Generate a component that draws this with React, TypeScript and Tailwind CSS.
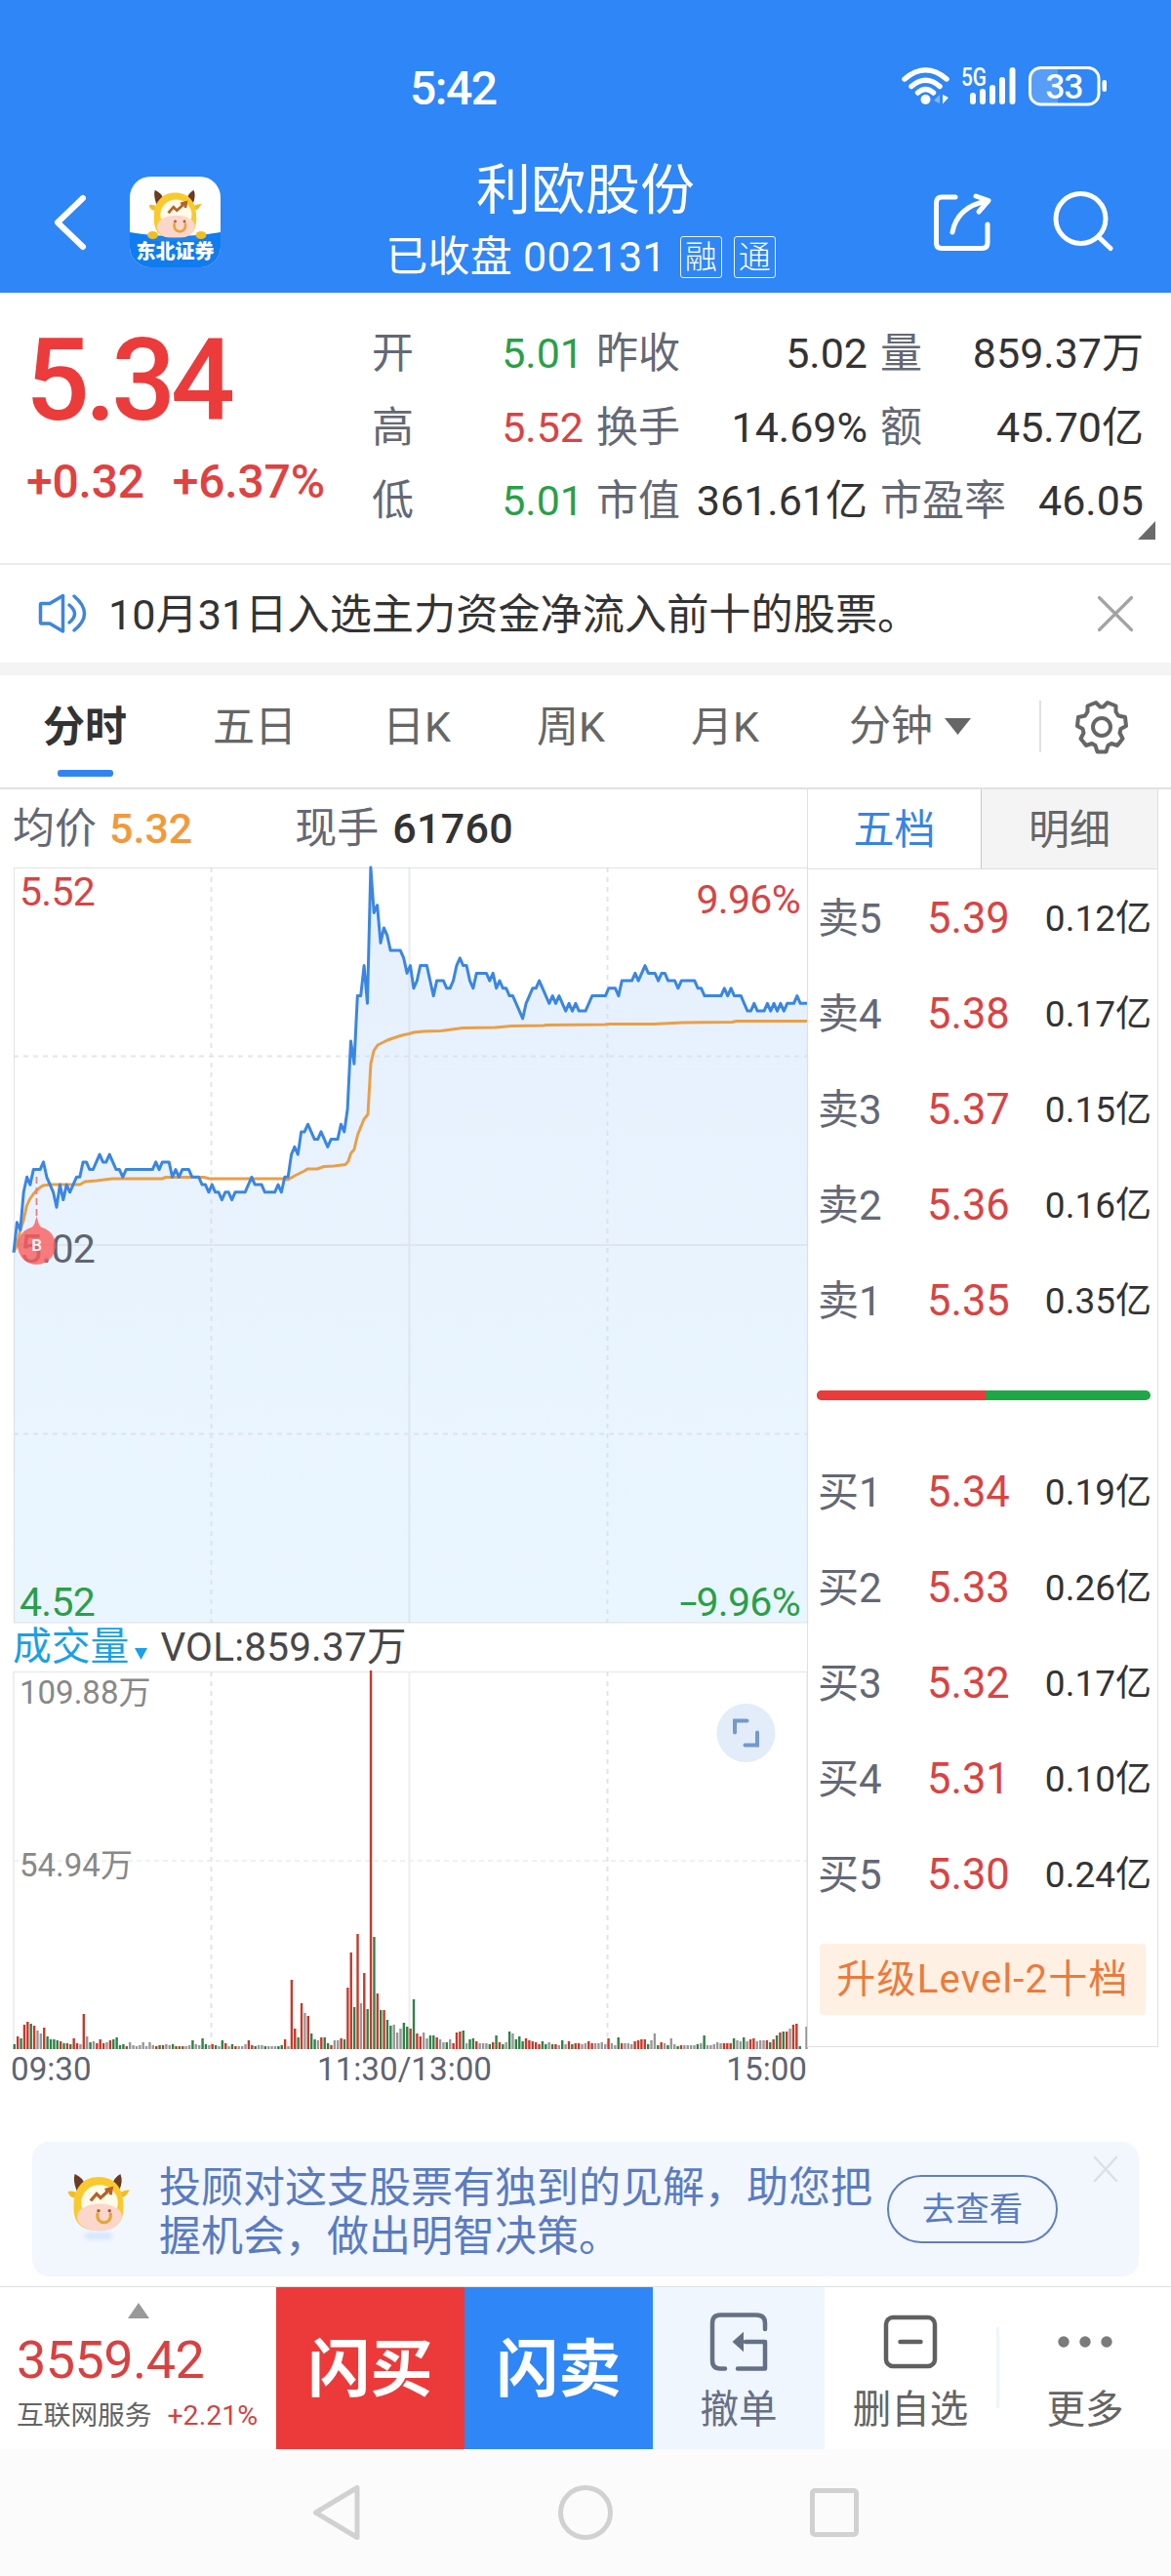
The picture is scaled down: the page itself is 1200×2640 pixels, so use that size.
import { useState } from 'react';

// price in cents, one entry per minute (09:30 - 15:00)
const PRICES = `
501 505 504 509 511 510 512 512 512 513 511 510 509 507 510 508 510 509 510 511 511 513 513 512 512 513 514 513 513 514
513 512 512 511 512 512 512 512 512 512 512 512 512 513 512 513 513 513 511 512 511 512 512 512 511 511 511 510 510 509
510 509 509 508 509 509 508 509 509 509 509 510 511 510 510 510 509 509 509 509 510 509 511 511 514 515 514 517 517 518
517 516 516 517 516 515 516 516 516 518 517 520 529 526 535 535 539 534 552 546 547 542 544 543 541 541 541 541 540 538
539 536 537 539 539 539 537 535 537 537 537 536 536 537 539 540 539 539 537 536 538 538 538 538 537 538 536 537 536 536
535 535 534 533 532 534 535 536 536 537 536 535 534 535 534 535 534 533 534 533 534 533 533 533 534 535 535 535 535 535
536 536 536 535 537 537 537 537 538 537 538 539 538 538 538 537 538 538 537 537 537 536 537 537 537 537 537 536 536 535
535 535 535 535 535 536 535 536 535 535 535 534 533 533 534 533 533 533 534 533 534 533 534 533 534 534 534 535 534 534 534
`.trim().split(/\s+/).map(Number);

// color letter + bar height
const VOLUMES = `
g5 r13 g11 r25 r28 g26 r24 y19 y16 r22
g13 g10 g10 g9 r8 g6 r6 g5 r11 r6
y5 r36 y13 g7 y8 r6 r10 r6 y7 r9
g10 g12 g4 g5 r3 y7 y4 y3 y4 y7
y3 y7 y4 r3 g4 r4 y5 y4 g5 r3
g3 r3 y3 y4 g9 y5 y4 g11 g5 y4
r5 g4 y3 g9 r6 y3 g5 r3 y3 y3
y5 r9 r4 g3 y4 y4 g3 y3 y3 y3
g3 g4 r10 y3 r71 r21 g12 r47 y37 r34
g16 g10 y9 r12 g12 g6 r4 y9 y9 r11
g10 r63 r99 g43 r118 y47 r78 g41 r388 g115
r57 g40 r40 g30 g24 y25 y17 y21 g27 g23
r21 g51 r16 r13 y17 y11 g14 g14 r12 y10
y7 g7 y10 r6 r17 r18 g19 y6 g10 g11
r8 y6 y6 y6 g5 r7 g14 r7 g5 y7
g18 y16 g10 g13 g8 r11 r9 r8 r7 r5
g8 g5 y7 g5 r5 y4 g9 y5 r8 g5
r6 r6 y5 y6 r8 r6 y6 y6 y7 y5
r11 y6 y4 g12 r6 y6 y6 y5 r8 r9
r10 r10 g5 y9 y16 g4 r7 y6 g4 y11
y5 g3 r4 y4 y4 y4 y4 g5 y6 g14
y4 y4 y5 y7 y6 r6 r6 r6 g11 y9
y8 g12 y8 r10 r11 y8 y9 y9 r9 g7
r10 g14 r17 g18 r18 y21 r25 r26 g3 y0
y23
`.trim().split(/\s+/);

const AVERAGE =
  '0,394 3.3,387 6.7,372 10,362 13.3,347 16.5,340 20,335 23.5,331 27,328 30,326 37,325 44,325 68,325 73,322 85,321 101,319 152,319 156,317.5 195,317.5 201,319 276,319 281,320 288,316 294,313 298,311 301,309 311,309 318,306.5 328,306 340,304.5 343,301 345.5,293 349,289 352.5,274 359,258 363,253 366,201 369,188 373,182 383,177 393,173.5 400,171.5 405,170.5 410,169 420,168 438,167.5 460,164.5 493,164 510,162.5 543,162 546,161.5 606,161 610,160.5 656,160.5 686,159 736,158.5 741,157.5 813,157.5';

const W = 813;
const COLORS: Record<string, string> = { r: '#c5392b', g: '#2f8147', y: '#989898' };

const sells = [
  ['卖5', '5.39', '0.12亿'],
  ['卖4', '5.38', '0.17亿'],
  ['卖3', '5.37', '0.15亿'],
  ['卖2', '5.36', '0.16亿'],
  ['卖1', '5.35', '0.35亿'],
];
const buys = [
  ['买1', '5.34', '0.19亿'],
  ['买2', '5.33', '0.26亿'],
  ['买3', '5.32', '0.17亿'],
  ['买4', '5.31', '0.10亿'],
  ['买5', '5.30', '0.24亿'],
];

function Cow({ className }: { className?: string }) {
  return (
    <svg viewBox="0 0 64 60" className={className}>
      <path d="M10 18 Q6 8 8 1 Q17 5 18 12 Z M46 12 Q47 5 54 1 Q57 8 53 17 Z" fill="#6b3a24" />
      <path d="M11 20 Q4 17 1 19 Q3 26 10 25 Z M53 20 Q59 17 63 17 Q61 24 54 25 Z" fill="#f3bd22" />
      <path d="M32 4 C48 4 57 15 57 32 C58 50 50 58 32 58 C14 58 6 50 7 32 C7 16 16 4 32 4 Z" fill="#f8ca2c" />
      <ellipse cx="33" cy="30" rx="18.5" ry="18" fill="#fffbe8" />
      <path d="M19 34 C25 30 42 30 47 34 C57 37 58 47 50 53 C42 60 23 60 15 53 C7 46 10 37 19 34 Z" fill="#fcd6cb" />
      <path d="M24 28 L30 21 L34 25 L43 17 M38.500 17 L45 15.500 L44 22" fill="none" stroke="#b5622c" strokeWidth="3.200" />
      <circle cx="32" cy="38" r="1.700" fill="#a8603a" />
      <circle cx="43" cy="38" r="1.700" fill="#a8603a" />
      <path d="M31 41 C29 53 46 53 44 41" fill="none" stroke="#e2a63a" strokeWidth="3" strokeLinecap="round" />
    </svg>
  );
}

function StatusBar() {
  return (
    <div className="flex h-[157px] items-start pl-[420px] pr-[66px] pt-[62px] text-white">
      <span className="text-[48px] font-medium leading-[57px] tracking-[-1.5px]">5:42</span>
      <svg className="ml-auto mt-[4px]" width="212" height="44" viewBox="922 66 212 44">
        <g fill="none" stroke="#fff" strokeWidth="5.500" strokeLinecap="round">
          <path d="M927 81 Q948.500 62.500 970 81" />
          <path d="M934 88.500 Q948.500 76 963 88.500" />
          <path d="M940.500 95 Q948.500 88 956.500 95" />
        </g>
        <circle cx="948.500" cy="102" r="5" fill="#fff" />
        <path d="M963 97 V106 L957 103 Z" fill="#fff" opacity=".4" />
        <path d="M966 97 V106.500 L972 100 Z" fill="#fff" />
        <text x="985" y="88" fontSize="25" fontWeight="500" fill="#fff" textLength="26" lengthAdjust="spacingAndGlyphs">5G</text>
        <g stroke="#fff" strokeWidth="6" strokeLinecap="round">
          <path d="M997 98 V104 M1007 94 V104 M1017 90 V104 M1027 82 V104 M1037.500 72 V104" />
        </g>
        <path d="M1066 69.500 H1084 V106.500 H1066 Q1055.500 106.500 1055.500 96 V80 Q1055.500 69.500 1066 69.500" fill="#fff" opacity=".2" />
        <rect x="1055.500" y="69.500" width="70.500" height="37.500" rx="11" fill="none" stroke="#fff" strokeWidth="3" />
        <rect x="1129.500" y="82" width="4.500" height="12" rx="2" fill="#fff" />
        <text x="1090.500" y="101" fontSize="35" fontWeight="500" fill="#fff" textAnchor="middle" letterSpacing="-0.800">33</text>
      </svg>
    </div>
  );
}

function TopBar() {
  return (
    <div className="flex h-[143px] items-start text-white">
      <div className="flex w-[340px] items-start pl-[52px]">
        <svg className="mt-[42px]" width="38" height="58" viewBox="0 0 38 58" fill="none" stroke="#fff" strokeWidth="6" strokeLinecap="round" strokeLinejoin="round">
          <path d="M33 4 L7 29 L33 54" />
        </svg>
        <div className="relative ml-[43px] mt-[24px] h-[93px] w-[93px] overflow-hidden rounded-[21px] bg-white">
          <svg className="absolute inset-0" width="93" height="93" viewBox="0 0 93 93">
            <path d="M0 57 Q46 65 93 57 V93 H0 Z" fill="#0f7cf0" />
          </svg>
          <Cow className="absolute left-[15px] top-[13px] h-[52px] w-[63px]" />
          <svg className="absolute inset-0" width="93" height="93" viewBox="0 0 93 93">
            <path d="M22 61 Q46 64 70 61 V66 H22 Z" fill="#1b84f2" />
            <ellipse cx="23.500" cy="60" rx="5.500" ry="4" fill="#f3bd22" />
            <ellipse cx="73" cy="60" rx="5.500" ry="4" fill="#f3bd22" />
          </svg>
          <span className="absolute inset-x-0 top-[65px] text-center text-[20px] font-black leading-[24px]">东北证券</span>
        </div>
      </div>
      <div className="flex flex-1 flex-col items-center pt-[6px]">
        <h1 className="text-[56px] leading-[64px]">利欧股份</h1>
        <div className="mr-[10px] flex items-center pt-[8px] text-[43px] leading-[56px]">
          <span className="whitespace-pre tracking-[0.300px]">已收盘 002131</span>
          <span className="ml-[14px] flex h-[43px] w-[43px] items-center justify-center rounded-[3px] border-[1.500px] border-white/90 text-[33px] font-light leading-none">融</span>
          <span className="ml-[12px] flex h-[43px] w-[43px] items-center justify-center rounded-[3px] border-[1.500px] border-white/90 text-[33px] font-light leading-none">通</span>
        </div>
      </div>
      <div className="flex w-[340px] justify-end pr-[58px] pt-[37px]">
        <svg width="190" height="68" viewBox="952 194 190 68" fill="none" stroke="#fff" strokeWidth="5" strokeLinecap="round" strokeLinejoin="round">
          <path d="M979 202 H965 Q959.500 202 959.500 208 V249 Q959.500 254.500 965 254.500 H1006 Q1012 254.500 1012 249 V230" />
          <path d="M976 238 Q981 212 1011 206 M1000 201 L1013 205.500 L1003 217" />
          <circle cx="1107.500" cy="224" r="25.500" />
          <path d="M1127 244 L1138 254.500" />
        </svg>
      </div>
    </div>
  );
}

function Stat({ label, value, color = 'text-[#333]' }: { label: string; value: string; color?: string }) {
  return (
    <div className="flex justify-between">
      <span className="text-[#646875]">{label}</span>
      <span className={color}>{value}</span>
    </div>
  );
}

function Quote() {
  return (
    <section className="relative flex h-[279px] border-b-[2px] border-[#ebebeb]">
      <div className="w-[381px] pt-[38px]">
        <div className="pl-[26px] text-[116px] font-medium leading-[104px] tracking-[-5px] text-[#ec3b3b]">5.34</div>
        <div className="flex gap-[29px] whitespace-nowrap pl-[27px] pt-[21px] text-[48px] font-medium leading-[62px] tracking-[-0.200px] text-[#e04141]">
          <span>+0.32</span>
          <span>+6.37%</span>
        </div>
      </div>
      <div className="grid flex-1 grid-cols-[217px_278px_270px] content-start gap-x-[13px] pt-[25px] text-[43px] leading-[75.500px] whitespace-nowrap">
        <Stat label="开" value="5.01" color="text-[#2a9f48]" />
        <Stat label="昨收" value="5.02" />
        <Stat label="量" value="859.37万" />
        <Stat label="高" value="5.52" color="text-[#d84444]" />
        <Stat label="换手" value="14.69%" />
        <Stat label="额" value="45.70亿" />
        <Stat label="低" value="5.01" color="text-[#2a9f48]" />
        <Stat label="市值" value="361.61亿" />
        <Stat label="市盈率" value="46.05" />
      </div>
      <svg className="absolute bottom-[24px] right-[16px]" width="18" height="19">
        <path d="M18 0 V19 H0 Z" fill="#6a6a6a" />
      </svg>
    </section>
  );
}

function Notice({ onClose }: { onClose: () => void }) {
  return (
    <section className="flex h-[100px] items-center pl-[38px] pr-[38px] text-[#333]">
      <svg width="52" height="44" viewBox="38 608 52 44" fill="none" stroke="#3f85dc" strokeWidth="3.500" strokeLinecap="round" strokeLinejoin="round">
        <path d="M42 619.500 H51 L64.500 611.500 V648 L51 640 H42 Q41.500 640 41.500 638 V621 Q41.500 619.500 42 619.500 Z" />
        <path d="M71 621 Q82 630 71 639 M76 612 Q97 630 76 647" />
      </svg>
      <p className="ml-[21px] mt-[3px] whitespace-nowrap text-[43.200px] leading-[60px]">10月31日入选主力资金净流入前十的股票。</p>
      <svg className="ml-auto cursor-pointer" onClick={onClose} width="38" height="38" viewBox="0 0 38 38" stroke="#a3a3a3" strokeWidth="3.200" strokeLinecap="round">
        <path d="M2.500 2.500 L35.500 35.500 M35.500 2.500 L2.500 35.500" />
      </svg>
    </section>
  );
}

function Tabs() {
  const [tab, setTab] = useState('分时');
  return (
    <nav className="flex h-[117px] items-start gap-[88px] border-b-[2px] border-[#e2e2e2] pl-[44px] text-[43px] text-[#666]">
      {['分时', '五日', '日K', '周K', '月K'].map((t) => (
        <button key={t} onClick={() => setTab(t)} className="relative flex h-[104px] flex-col items-center">
          <span className={t === tab ? 'leading-[107px] font-bold text-[#333]' : 'leading-[107px]'}>{t}</span>
          {t === tab && <span className="absolute bottom-0 h-[7px] w-[57px] rounded-[3px] bg-[#3384f3]" />}
        </button>
      ))}
      <button className="ml-[4px] flex h-[104px] items-center gap-[12px]">
        <span className="leading-[107px]">分钟</span>
        <svg width="27" height="17"><path d="M0 0 H27 L13.500 17 Z" fill="#666" /></svg>
      </button>
      <span className="ml-[-18px] mt-[26px] h-[53px] w-[2px] shrink-0 bg-[#e2e2e2]" />
      <svg className="ml-[-54px] mt-[25px]" width="56" height="56" viewBox="-28 -28 56 56" fill="none" stroke="#666" strokeWidth="4" strokeLinejoin="round">
        <path d="M-6 -25 L-1.500 -20.500 H1.500 L6 -25 L14.500 -21.500 V-15.500 L17 -11.500 L24 -10 L25 -1 L19.500 2 L18.500 6 L21.500 12 L16 19 L10 17 L6.500 19 L4.500 25.500 H-4.500 L-6.500 19 L-10 17 L-16 19 L-21.500 12 L-18.500 6 L-19.500 2 L-25 -1 L-24 -10 L-17 -11.500 L-14.500 -15.500 V-21.500 Z" />
        <circle r="9" />
      </svg>
    </nav>
  );
}

function PriceChart() {
  const points = PRICES.map((p, i) => `${((i * W) / (PRICES.length - 1)).toFixed(1)},${((552 - p) * 7.74).toFixed(1)}`).join(' ');
  return (
    <svg className="block overflow-visible" width={W} height="774" viewBox={`0 0 ${W} 774`}>
      <defs>
        <linearGradient id="area" x1="0" y1="0" x2="0" y2="1">
          <stop offset="0" stopColor="#e6f0fd" />
          <stop offset="1" stopColor="#eaf6ff" />
        </linearGradient>
      </defs>
      <polygon points={`0,774 ${points} ${W},774`} fill="url(#area)" />
      <g stroke="#d9dce0" strokeOpacity=".75" fill="none">
        <rect x=".5" y=".5" width={W} height="773.500" strokeWidth="1.200" />
        <path d={`M405.500 0 V774 M0 387 H${W}`} strokeWidth="2" strokeOpacity=".6" />
        <path d={`M202.500 0 V774 M608.500 0 V774 M0 193.500 H${W} M0 580.500 H${W}`} strokeWidth="2" strokeDasharray="5 5" />
      </g>
      <polyline points={AVERAGE} fill="none" stroke="#e99f47" strokeWidth="3" strokeLinejoin="round" />
      <polyline points={points} fill="none" stroke="#3a86e2" strokeWidth="3" strokeLinejoin="round" />
      <g fontSize="41" letterSpacing="-0.700">
        <text x="6" y="39" fill="#d64545">5.52</text>
        <text x="806" y="47" fill="#d64545" textAnchor="end">9.96%</text>
        <text x="6" y="405" fill="#5f6472">5.02</text>
        <text x="6" y="767" fill="#2a9f48">4.52</text>
        <text x="806" y="767" fill="#2a9f48" textAnchor="end">
          <tspan textLength="17" lengthAdjust="spacingAndGlyphs">-</tspan>9.96%
        </text>
      </g>
      <path d="M23.500 317 V362" stroke="#e58080" strokeWidth="1.800" strokeDasharray="7 4" />
      <path d="M23.500 357 Q25 366 28 368.500 A19.500 19.500 0 1 1 19 368.500 Q22 366 23.500 357 Z" fill="#fa5c5c" fillOpacity=".8" />
      <text x="23.500" y="393" fontSize="17" fontWeight="500" fill="#fff" textAnchor="middle">B</text>
    </svg>
  );
}

function VolumeChart() {
  return (
    <svg className="block overflow-visible" width={W} height="387" viewBox={`0 0 ${W} 387`}>
      <g stroke="#e4e4e4" fill="none">
        <path d={`M0 387 V.5 H${W} V387`} strokeWidth="1.200" />
        <path d="M405.500 0 V387" strokeWidth="2" stroke="#eee" />
        <path d="M202.500 0 V387 M608.500 0 V387" strokeWidth="2" strokeDasharray="5 5" />
        <path d={`M0 194 H${W}`} strokeWidth="1.500" stroke="#ececec" strokeDasharray="5 4" />
      </g>
      {VOLUMES.map((v, i) => {
        const h = Number(v.slice(1));
        return <rect key={i} x={i * 3.382 - 0.4} y={387 - h} width="2.400" height={h} fill={COLORS[v[0]]} />;
      })}
      <g fontSize="33" fill="#888">
        <text x="6" y="33">109.88万</text>
        <text x="6" y="210">54.94万</text>
      </g>
      <circle cx="750.500" cy="63" r="30" fill="#e2edf9" />
      <path d="M739 62.500 V50.500 H751.500 M749.500 75.500 H762 V62.500" fill="none" stroke="#7399cf" strokeWidth="4" strokeLinecap="round" />
    </svg>
  );
}

function LevelRow({ row }: { row: string[] }) {
  return (
    <div className="flex h-[98px] items-center whitespace-nowrap pl-[10px] pr-[6px] pt-[3px]">
      <span className="w-[112px] text-[42px] text-[#646875]">{row[0]}</span>
      <span className="text-[43.500px] text-[#d94343]">{row[1]}</span>
      <span className="ml-auto text-[37px] text-[#333]">{row[2]}</span>
    </div>
  );
}

function OrderBook() {
  return (
    <aside className="h-[1289px] w-[360px] border-b border-l border-r border-[#e0e0e0]">
      <div className="flex h-[82px] border-b border-[#e0e0e0] text-[42px] leading-[83px]">
        <button className="w-[177px] text-[#3884e2]">五档</button>
        <button className="flex-1 border-l border-[#c9c9c9] bg-[#f4f4f4] text-[#666]">明细</button>
      </div>
      {sells.map((r) => <LevelRow key={r[0]} row={r} />)}
      <div className="flex h-[98px] items-center pl-[9px] pr-[7px]">
        <div className="flex h-[10px] w-full overflow-hidden rounded-full bg-[#1fa646]">
          <span className="w-[173px] bg-[#ec3b3b]" />
        </div>
      </div>
      {buys.map((r) => <LevelRow key={r[0]} row={r} />)}
      <button className="ml-[12px] mt-[23px] h-[73px] w-[334px] whitespace-nowrap rounded-[4px] bg-[#fef0e2] text-[40px] leading-[74px] tracking-[1.200px] text-[#ec7a3c]">
        升级Level-2十档
      </button>
    </aside>
  );
}

function ChartSection() {
  return (
    <section className="flex h-[1345px]">
      <div className="w-[827px] pl-[14px]">
        <div className="flex h-[80px] items-center whitespace-nowrap text-[43px] leading-[80px]">
          <span className="ml-[-1px] text-[#646875]">均价</span>
          <span className="ml-[13px] font-medium text-[#f2993a]">5.32</span>
          <span className="ml-[105px] text-[#646875]">现手</span>
          <span className="ml-[14px] font-medium tracking-[0.300px] text-[#333]">61760</span>
        </div>
        <PriceChart />
        <div className="flex h-[50px] items-center whitespace-nowrap text-[40.500px] leading-[48px]">
          <span className="ml-[-1px] text-[39.800px] text-[#1aa0e6]">成交量</span>
          <svg className="ml-[6px] mt-[14px]" width="13" height="12"><path d="M0 0 H13 L6.500 12 Z" fill="#1aa0e6" /></svg>
          <span className="ml-[13px] tracking-[0.200px] text-[#484848]">VOL:859.37万</span>
        </div>
        <VolumeChart />
        <div className="ml-[-3px] flex justify-between pt-[1px] text-[33.200px] leading-[40px] text-[#5f6472]">
          <span className="w-[130px]">09:30</span>
          <span className="mr-[9px]">11:30/13:00</span>
          <span className="w-[130px] text-right">15:00</span>
        </div>
      </div>
      <OrderBook />
    </section>
  );
}

function Banner({ onClose }: { onClose: () => void }) {
  return (
    <section className="relative mx-[33px] mt-[41px] flex h-[138px] rounded-[17px] bg-[#f2f7fe] text-[#5a7bc1]">
      <div className="flex w-[130px] flex-col items-center pl-[6px] pt-[32px]">
        <Cow className="h-[61px] w-[66px]" />
        <div className="h-[7px] w-[28px] rounded-full bg-[#d3e6fb] blur-[2px]" />
      </div>
      <p className="w-[740px] pt-[22px] text-[43px] leading-[50px]">投顾对这支股票有独到的见解，助您把握机会，做出明智决策。</p>
      <button className="ml-[6px] mt-[34px] h-[70px] w-[175px] rounded-full border-[2.500px] border-[#5f7fbf] text-[34.500px] leading-[65px]">去查看</button>
      <svg className="absolute right-[21px] top-[14px] cursor-pointer" onClick={onClose} width="26" height="28" viewBox="0 0 26 28" stroke="#dcdfe3" strokeWidth="2.500" strokeLinecap="round">
        <path d="M2 2 L24 26 M24 2 L2 26" />
      </svg>
    </section>
  );
}

function BottomBar() {
  return (
    <footer className="mt-[10px] flex h-[167px] border-t border-[#e0e0e0] text-[#646464]">
      <div className="w-[283px] pt-[16px]">
        <svg className="ml-[131px] block" width="22" height="16"><path d="M11 0 L22 16 H0 Z" fill="#999" /></svg>
        <div className="mt-[14px] pl-[17px] text-[54px] leading-[58px] tracking-[-0.600px] text-[#d94141]">3559.42</div>
        <div className="flex whitespace-nowrap pl-[17px] pt-[10px] text-[27.700px] leading-[36px]">
          <span>互联网服务</span>
          <span className="ml-[16px] text-[28.500px] text-[#d04444]">+2.21%</span>
        </div>
      </div>
      <button className="w-[193px] bg-[#ec3a3a] pt-[3px] text-[64px] font-bold text-white">闪买</button>
      <button className="w-[193px] bg-[#2f86f6] pt-[3px] text-[64px] font-bold text-white">闪卖</button>
      <button className="flex w-[176px] flex-col items-center bg-[#eff6fe] pt-[25px] text-[39.500px] leading-[54px] text-[#667085]">
        <svg width="62" height="62" viewBox="0 0 62 62" fill="none" stroke="#667085" strokeWidth="4.500" strokeLinecap="round">
          <path d="M17 58.500 H12 Q4 58.500 4 50 V12 Q4 3.500 12 3.500 H49 Q58 3.500 58 12 V18" />
          <path d="M38 31 H58 V58.500 H30" strokeLinejoin="round" />
          <path d="M26 31 L35 23 V39 Z" fill="#667085" strokeWidth="2" />
        </svg>
        <span className="mt-[12px]">撤单</span>
      </button>
      <button className="flex w-[176px] flex-col items-center pt-[28px] text-[39.500px] leading-[54px]">
        <svg width="56" height="56" viewBox="0 0 56 56" fill="none" stroke="#606060" strokeWidth="4.500" strokeLinecap="round">
          <rect x="3" y="3" width="50" height="50" rx="7" />
          <path d="M17.500 28 H38.500" />
        </svg>
        <span className="mt-[15px]">删自选</span>
      </button>
      <span className="mt-[41px] h-[83px] w-[3px] bg-[#eef5fc]" />
      <button className="flex flex-1 flex-col items-center pt-[50px] text-[39.500px] leading-[54px]">
        <svg width="56" height="12" viewBox="0 0 56 12" fill="#7b7b7b">
          <circle cx="6" cy="6" r="5.700" />
          <circle cx="28" cy="6" r="5.700" />
          <circle cx="50" cy="6" r="5.700" />
        </svg>
        <span className="mt-[37px]">更多</span>
      </button>
    </footer>
  );
}

function SystemNav() {
  return (
    <div className="flex h-[130px] items-center justify-between bg-[#fbfbfb] pl-[318px] pr-[318px]">
      <svg width="54" height="60" viewBox="0 0 54 60" fill="none" stroke="#d1d1d1" strokeWidth="5" strokeLinejoin="round">
        <path d="M48 4.500 V55.500 L5.500 30 Z" />
      </svg>
      <svg width="58" height="58" viewBox="0 0 58 58" fill="none" stroke="#d1d1d1" strokeWidth="5">
        <circle cx="29" cy="29" r="25.500" />
      </svg>
      <svg width="54" height="54" viewBox="0 0 54 54" fill="none" stroke="#d1d1d1" strokeWidth="5">
        <rect x="4.500" y="4.500" width="45" height="45" rx="2.500" />
      </svg>
    </div>
  );
}

export default function App() {
  const [notice, setNotice] = useState(true);
  const [banner, setBanner] = useState(true);

  return (
    <div className="flex h-[2640px] w-[1200px] flex-col overflow-hidden bg-white font-[Roboto,'Noto_Sans_CJK_SC',sans-serif]">
      <header className="bg-[#2f86f6]">
        <StatusBar />
        <TopBar />
      </header>
      <Quote />
      {notice && <Notice onClose={() => setNotice(false)} />}
      <div className="h-[13px] bg-[#f4f4f4]" />
      <Tabs />
      <ChartSection />
      {banner && <Banner onClose={() => setBanner(false)} />}
      <div className="mt-auto">
        <BottomBar />
        <SystemNav />
      </div>
    </div>
  );
}
